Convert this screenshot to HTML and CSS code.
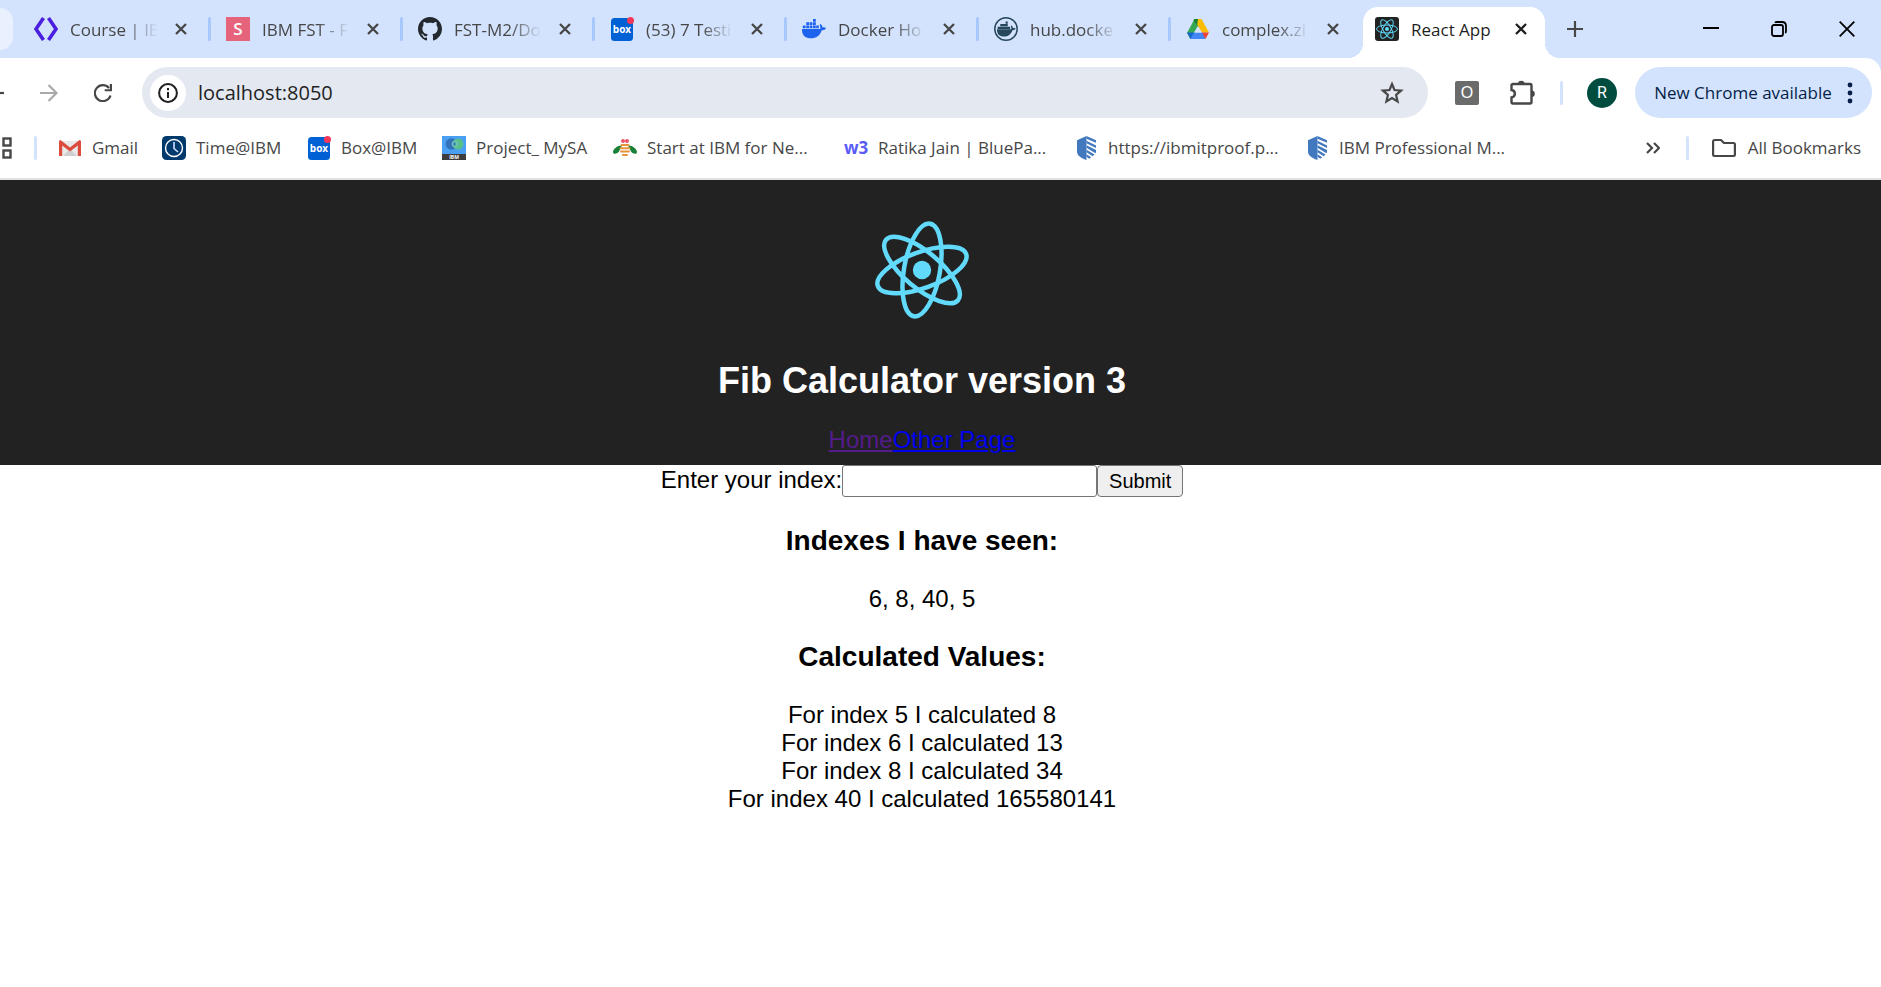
FILE: index.html
```html
<!DOCTYPE html>
<html lang="en">
<head>
<meta charset="utf-8">
<title>React App</title>
<link rel="stylesheet" href="styles.css">
</head>
<body>
<svg class="defs" aria-hidden="true">
  <symbol id="close" viewBox="0 0 12 12"><path d="M1 1l10 10M11 1L1 11" fill="none" stroke="currentColor" stroke-width="2.3"/></symbol>
  <symbol id="box" viewBox="0 0 24 24">
    <rect x="1" y="1" width="22" height="23" rx="3.5" fill="#0061d5"/>
    <text x="12" y="16" text-anchor="middle" class="box-text">box</text>
    <circle cx="20.500" cy="3.500" r="3.500" fill="#f5385a"/>
  </symbol>
  <symbol id="whale" viewBox="0 0 24 24">
    <path d="M0 12h18.200c.4-1 .2-2.800-.6-3.900l.9-1.100c1.300.9 2 2.200 2 3.400 1.200-.3 2.600-.1 3.500.6-.6 1.500-2.200 2.300-4.200 2.200C18 18.500 14.200 21.300 9 21.300 3 21.300-.3 18 0 12z"/>
    <path d="M.8 8.500h2.800v2.800H.8zM4.200 8.500H7v2.800H4.200zM7.600 8.500h2.800v2.800H7.600zM11 8.500h2.800v2.800H11zM14.200 8.500h2.600v2.800h-2.600zM4.200 5.200H7V8H4.200zM7.600 5.200h2.800V8H7.600zM11 5.200h2.800V8H11zM11 1.900h2.800v2.800H11z"/>
  </symbol>
  <symbol id="shield" viewBox="0 0 24 24">
    <g fill="#4178be"><path d="M12.500 0v24C6 22 3 19 3 15.500V4.200z"/>
    <path d="M12.500 0L22 4.200v2.600L12.500 2.800zM12.500 4.800L22 9.600v2.500l-9.500-4.800zM12.500 9.300L22 14v2.200l-.6 1-8.900-5.400zM12.500 13.800l8 4.700-1.800 1.700-6.200-3.900zM12.500 18.300l4.700 3-2 1.400-2.700-1.900z"/></g>
  </symbol>
  <symbol id="react" viewBox="-60 -60 120 120">
    <circle r="9.200" fill="currentColor"/>
    <g fill="none" stroke="currentColor" stroke-width="4.500">
      <ellipse rx="47" ry="18" transform="rotate(-20)"/><ellipse rx="47" ry="18" transform="rotate(-80)"/><ellipse rx="47" ry="18" transform="rotate(40)"/>
    </g>
  </symbol>
  <symbol id="react-small" viewBox="-12 -12 24 24">
    <circle r="2" fill="currentColor"/>
    <g fill="none" stroke="currentColor" stroke-width="1">
      <ellipse rx="10.500" ry="4"/><ellipse rx="10.500" ry="4" transform="rotate(60)"/><ellipse rx="10.500" ry="4" transform="rotate(120)"/>
    </g>
  </symbol>
</svg>

<div class="browser">
  <div class="tabs">
    <span class="tab-stub"></span>
    <div class="tab first"><span class="sep"></span>
      <svg class="icon" viewBox="0 0 24 24"><path d="M9.500 1L2 12l7.500 11M14.500 1L22 12l-7.500 11" fill="none" stroke="#4b1fe0" stroke-width="3.600"/></svg>
      <span class="tab-title">Course | IB</span><button class="tab-close" aria-label="Close tab"><svg><use href="#close"/></svg></button></div>
    <div class="tab"><span class="sep"></span>
      <span class="icon letter-s">S</span>
      <span class="tab-title">IBM FST - F</span><button class="tab-close" aria-label="Close tab"><svg><use href="#close"/></svg></button></div>
    <div class="tab"><span class="sep"></span>
      <svg class="icon" viewBox="0 0 16 16"><path fill="#24292f" d="M8 0C3.580 0 0 3.580 0 8c0 3.540 2.290 6.530 5.470 7.590.4.070.55-.17.55-.38 0-.19-.01-.82-.01-1.490-2.010.37-2.530-.49-2.690-.94-.09-.23-.48-.94-.82-1.130-.28-.15-.68-.52-.01-.53.63-.01 1.080.58 1.230.82.72 1.210 1.870.87 2.330.66.07-.52.28-.87.51-1.070-1.780-.2-3.640-.89-3.640-3.950 0-.87.31-1.590.82-2.150-.08-.2-.36-1.020.08-2.120 0 0 .67-.21 2.200.82.64-.18 1.320-.27 2-.27s1.360.09 2 .27c1.530-1.040 2.200-.82 2.200-.82.44 1.100.16 1.920.08 2.120.51.56.82 1.270.82 2.150 0 3.070-1.870 3.750-3.650 3.950.29.25.54.73.54 1.480 0 1.070-.01 1.930-.01 2.200 0 .21.15.46.55.38A8.010 8.010 0 0 0 16 8c0-4.420-3.580-8-8-8z"/></svg>
      <span class="tab-title">FST-M2/Do</span><button class="tab-close" aria-label="Close tab"><svg><use href="#close"/></svg></button></div>
    <div class="tab"><span class="sep"></span>
      <svg class="icon"><use href="#box"/></svg>
      <span class="tab-title">(53) 7 Testi</span><button class="tab-close" aria-label="Close tab"><svg><use href="#close"/></svg></button></div>
    <div class="tab"><span class="sep"></span>
      <svg class="icon whale"><use href="#whale"/></svg>
      <span class="tab-title">Docker Ho</span><button class="tab-close" aria-label="Close tab"><svg><use href="#close"/></svg></button></div>
    <div class="tab"><span class="sep"></span>
      <svg class="icon" viewBox="0 0 24 24"><circle cx="12" cy="12" r="11.200" fill="none" stroke="#27475d" stroke-width="1.500"/><g fill="#27475d" transform="translate(3 3) scale(.78)"><path d="M0 12h18.200c.4-1 .2-2.800-.6-3.900l.9-1.100c1.300.9 2 2.200 2 3.400 1.200-.3 2.600-.1 3.500.6-.6 1.500-2.200 2.300-4.200 2.200C18 18.500 14.200 21.300 9 21.300 3 21.300-.3 18 0 12zM.8 8.500h16v3H.8zM4.200 5.200h9.600V8H4.200zM11 1.900h2.800v2.800H11z"/></g></svg>
      <span class="tab-title">hub.docke</span><button class="tab-close" aria-label="Close tab"><svg><use href="#close"/></svg></button></div>
    <div class="tab"><span class="sep"></span>
      <svg class="icon" viewBox="0 0 24 24"><path fill="#34a853" d="M8.500 2H12l2.500 4.600L5.200 22H4.400L1 16z"/><path fill="#188038" d="M8.500 2H12l1.500 4.500L11.500 9 7.500 3.600z"/><path fill="#fbbc04" d="M12 2h3.500L23 15.500h-7L11.200 7.500z"/><path fill="#4285f4" d="M7.500 15.500H17l2.500 6.500H4.500z"/><path fill="#1967d2" d="M1 15.500h7L4.500 22z"/><path fill="#ea4335" d="M16 15.500h7L19.500 22z"/><path fill="#d3e3fd" d="M11.800 9l4 6.500H8z"/></svg>
      <span class="tab-title">complex.zi</span><button class="tab-close" aria-label="Close tab"><svg><use href="#close"/></svg></button></div>
    <div class="tab active">
      <svg class="icon react-icon"><use href="#react-small"/></svg>
      <span class="tab-title">React App</span><button class="tab-close" aria-label="Close tab"><svg><use href="#close"/></svg></button></div>
    <button class="new-tab" aria-label="New tab"><svg viewBox="0 0 16 16"><path d="M8 0v16M0 8h16" stroke="#474747" stroke-width="2.200"/></svg></button>
    <div class="window-buttons">
      <button aria-label="Minimize"><svg viewBox="0 0 16 16"><path d="M0 7h16" stroke="#000" stroke-width="2"/></svg></button>
      <button aria-label="Restore"><svg viewBox="0 0 16 16"><g fill="none" stroke="#000" stroke-width="1.800"><rect x="1" y="4" width="11" height="11" rx="2"/><path d="M4 1.800Q4.500 1 6 1h5q4 0 4 4v5q0 1.500-.8 2"/></g></svg></button>
      <button aria-label="Close"><svg viewBox="0 0 16 16"><path d="M.7.7l14.600 14.600M15.300.7L.7 15.300" stroke="#000" stroke-width="1.800"/></svg></button>
    </div>
  </div>

  <div class="toolbar">
    <button class="nav back" aria-label="Back"><svg viewBox="0 0 4 18"><path d="M0 9h4" stroke="#474747" stroke-width="2.200"/></svg></button>
    <button class="nav" aria-label="Forward"><svg viewBox="0 0 18 18"><path d="M0 9h16.500M8.500 1l8 8-8 8" fill="none" stroke="#a9a9a9" stroke-width="2.200"/></svg></button>
    <button class="nav" aria-label="Reload"><svg viewBox="0 0 18 18"><path d="M16.500 11.500A8 8 0 1 1 15 4" fill="none" stroke="#474747" stroke-width="2.200"/><path d="M18 0v7.300h-7.300V5.200h5.100V0z" fill="#474747"/></svg></button>
    <div class="omnibox">
      <button class="site-info" aria-label="Site information"><svg viewBox="0 0 20 20"><circle cx="10" cy="10" r="8.900" fill="none" stroke="#1f1f1f" stroke-width="2"/><path d="M9 9h2v6H9zM9 5h2v2.200H9z" fill="#1f1f1f"/></svg></button>
      <input class="url" aria-label="Address" value="localhost:8050">
      <button class="star" aria-label="Bookmark this tab"><svg viewBox="0 0 24 24"><path d="M12 3l2.500 6 6.600.6-5 4.300 1.500 6.500-5.600-3.400-5.600 3.400 1.500-6.500-5-4.300 6.600-.6z" fill="none" stroke="#474747" stroke-width="2.200"/></svg></button>
    </div>
    <button class="ext" aria-label="Extension O">O</button>
    <button class="puzzle" aria-label="Extensions"><svg viewBox="0 0 25 25"><path d="M3 4h17a1.500 1.500 0 0 1 1.500 1.500V22A1.500 1.500 0 0 1 20 23.500H3A1.500 1.500 0 0 1 1.500 22v-4.500c4.500-.8 4.500-6.700 0-7.500V5.500A1.500 1.500 0 0 1 3 4z" fill="none" stroke="#474747" stroke-width="2.400"/><path d="M8 4a3.300 3.300 0 0 1 6.600 0zM21.500 10.500a3.300 3.300 0 0 1 0 6.600z" fill="#474747"/></svg></button>
    <span class="sep light"></span>
    <button class="avatar" aria-label="Profile">R</button>
    <button class="update">New Chrome available<svg viewBox="0 0 6 22"><circle cx="3" cy="3" r="2.400"/><circle cx="3" cy="11" r="2.400"/><circle cx="3" cy="19" r="2.400"/></svg></button>
  </div>

  <nav class="bookmarks" aria-label="Bookmarks">
    <button class="apps" aria-label="Apps"><svg viewBox="0 0 12 22"><g fill="none" stroke="#474747" stroke-width="2.400"><rect x="3.500" y="1.500" width="7" height="7"/><rect x="3.500" y="13.500" width="7" height="7"/></g></svg></button>
    <span class="sep light"></span>
    <div class="bookmark-list">
      <a href="#"><svg class="icon" viewBox="0 0 24 24"><path fill="#e9e9e9" d="M2 5h20v15H2z"/><path fill="#d0d0d0" d="M5 20l7-7 7 7z"/><path fill="#dd4b3e" d="M1 5.500Q1 4 2.500 4L12 11.500 21.500 4Q23 4 23 5.500V20h-3.200V9.500L12 15.500 4.200 9.500V20H1z"/></svg>Gmail</a>
      <a href="#"><svg class="icon" viewBox="0 0 24 24"><rect width="24" height="24" rx="4.500" fill="#003a6d"/><circle cx="12" cy="12" r="8.500" fill="none" stroke="#fff" stroke-width="1.400"/><path d="M12 6v6.500l4 3.500" fill="none" stroke="#d0e2ff" stroke-width="1.600"/></svg>Time@IBM</a>
      <a href="#"><svg class="icon"><use href="#box"/></svg>Box@IBM</a>
      <a href="#"><svg class="icon" viewBox="0 0 24 24"><path fill="#4b9ff2" d="M0 0h24v18H0z"/><path fill="#3d3d3d" d="M0 18h24v6H0z"/><circle cx="9.500" cy="8" r="5.800" fill="#3271b8"/><circle cx="16" cy="8" r="5.500" fill="#58c08c"/><circle cx="12.500" cy="8" r="2.500" fill="#3d94a6" stroke="#8fd1c9"/><text x="12" y="23" text-anchor="middle" class="ibm-text">IBM</text></svg>Project_ MySA</a>
      <a href="#"><svg class="icon" viewBox="0 0 24 24"><circle cx="10" cy="5" r="2" fill="#ee5366"/><circle cx="14" cy="5" r="2" fill="#ee5366"/><path fill="#198038" d="M9 9.500C5 9 0 13 0 16c0 3 5 2 6.500-1.500zM15 9.500c4-.5 9 3.500 9 6.500 0 3-5 2-6.500-1.500z"/><path d="M8.500 9h7M7.500 12.300h9M8 15.600h8M10 18.900h4" stroke="#e8933b" stroke-width="2" stroke-linecap="round"/></svg>Start at IBM for Ne...</a>
      <a href="#"><span class="icon w3">w3</span>Ratika Jain | BluePa...</a>
      <a href="#"><svg class="icon"><use href="#shield"/></svg>https://ibmitproof.p...</a>
      <a href="#"><svg class="icon"><use href="#shield"/></svg>IBM Professional M...</a>
    </div>
    <button class="more" aria-label="More bookmarks"><svg viewBox="0 0 14 12"><path d="M1 1l5 5-5 5M8 1l5 5-5 5" fill="none" stroke="#474747" stroke-width="2.200"/></svg></button>
    <span class="sep light"></span>
    <button class="all"><svg class="icon" viewBox="0 0 24 24"><path d="M2.500 4h6.500l3 3h9.500a1.400 1.400 0 0 1 1.400 1.400v10.200a1.400 1.400 0 0 1-1.400 1.400h-19a1.400 1.400 0 0 1-1.400-1.400V5.400A1.400 1.400 0 0 1 2.500 4z" fill="none" stroke="#474747" stroke-width="2.200"/></svg>All Bookmarks</button>
  </nav>
</div>

<div class="app">
  <header class="app-header">
    <svg class="app-logo" role="img" aria-label="logo"><use href="#react"/></svg>
    <h1>Fib Calculator version 3</h1>
    <a class="visited" href="#">Home</a><a href="#other">Other Page</a>
  </header>
  <main>
    <form><label for="index">Enter your index:</label><input id="index" type="text"><button type="button">Submit</button></form>
    <h3>Indexes I have seen:</h3>
    <div>6, 8, 40, 5</div>
    <h3>Calculated Values:</h3>
    <div>For index 5 I calculated 8</div>
    <div>For index 6 I calculated 13</div>
    <div>For index 8 I calculated 34</div>
    <div>For index 40 I calculated 165580141</div>
  </main>
</div>
</body>
</html>
```

FILE: styles.css
```css
* { box-sizing: border-box; }
body {
  margin: 0;
  background: #fff;
  color: #000;
  overflow-x: hidden;
}
.defs { position: absolute; width: 0; height: 0; }

/* Browser chrome */
.browser {
  font: 17px/24px "Open Sans", "Noto Sans", sans-serif;
  color: #474747;
  background: #d3e3fd;
  border-bottom: 2px solid #e2e2e2;
}
.browser button {
  display: flex;
  align-items: center;
  justify-content: center;
  flex: none;
  padding: 0;
  border: 0;
  background: none;
  color: inherit;
  font: inherit;
}
.browser svg { display: block; flex: none; }
.browser .icon { width: 24px; height: 24px; flex: none; }
.sep { flex: none; width: 3px; height: 24px; border-radius: 2px; background: #a8c7fa; }
.sep.light { background: #d3e3fd; }

.tabs {
  display: flex;
  align-items: center;
  height: 58px;
}
.tab-stub {
  flex: none;
  width: 13px;
  height: 42px;
  margin-right: 3px;
  border-radius: 0 15px 15px 0;
  background: #e9f1fe;
}
.tab {
  display: flex;
  align-items: center;
  flex: 0 1 192px;
  min-width: 0;
  padding-right: 21px;
}
.tab .icon { margin: 0 12px 0 15px; }
.tab.first .sep { background: none; }
.tab-title {
  flex: 1;
  min-width: 0;
  margin-right: 13px;
  padding-top: 1px;
  overflow: hidden;
  white-space: nowrap;
  -webkit-mask-image: linear-gradient(to right, #000 60%, transparent 95%);
  mask-image: linear-gradient(to right, #000 60%, transparent 95%);
}
.tab-close svg { width: 12px; height: 12px; }
.letter-s {
  background: #e6637c;
  color: #fff;
  font-weight: 600;
  text-align: center;
}
.whale { fill: #1d63ed; }
.box-text { font: 700 10px "Open Sans", sans-serif; fill: #fff; }
.ibm-text { font: 700 5px "Open Sans", sans-serif; fill: #fff; }
.tab.active {
  position: relative;
  align-self: flex-end;
  flex-basis: 182px;
  height: 51px;
  margin-left: 3px;
  padding: 0 18px 7px 12px;
  border-radius: 15px 15px 0 0;
  background: #fff;
  color: #1f1f1f;
}
.tab.active::before, .tab.active::after {
  content: "";
  position: absolute;
  bottom: 0;
  width: 15px;
  height: 15px;
}
.tab.active::before { right: 100%; background: radial-gradient(circle at 0 0, transparent 15px, #fff 15px); }
.tab.active::after { left: 100%; background: radial-gradient(circle at 100% 0, transparent 15px, #fff 15px); }
.tab.active .icon { margin-left: 0; }
.tab.active .tab-title { mask-image: none; -webkit-mask-image: none; }
.react-icon { border-radius: 3px; background: #222; color: #61dafb; }
.new-tab { margin-left: 22px; }
.new-tab svg, .window-buttons svg { width: 16px; height: 16px; }
.window-buttons {
  display: flex;
  margin-left: auto;
}
.window-buttons button { width: 68px; height: 40px; }

.toolbar {
  display: flex;
  align-items: center;
  padding: 9px 9px 0 0;
  border-top-right-radius: 15px;
  background: #fff;
}
.nav svg { width: 18px; height: 18px; }
.nav { margin-right: 36px; }
.nav.back svg { width: 4px; }
.nav + .nav + .nav { margin-right: 30px; }
.omnibox {
  display: flex;
  align-items: center;
  flex: 1;
  min-width: 0;
  height: 51px;
  padding: 0 24px 0 8px;
  border-radius: 26px;
  background: #e4e8f1;
}
.browser .site-info { width: 36px; height: 36px; border-radius: 50%; background: #fff; }
.site-info svg { width: 20px; height: 20px; }
.url {
  flex: 1;
  min-width: 0;
  margin-left: 12px;
  padding: 0;
  border: 0;
  background: none;
  color: #1f1f1f;
  font: 20px/28px "Open Sans", "Noto Sans", sans-serif;
}
.star svg { width: 24px; height: 24px; }
.browser .ext {
  width: 24px;
  height: 24px;
  margin: 0 31px 0 27px;
  border-radius: 2px;
  background: #6b6b6b;
  color: #fff;
  font: 16px/24px "Liberation Sans", sans-serif;
}
.puzzle { margin-right: 25px; }
.puzzle svg { width: 25px; height: 25px; }
.browser .avatar {
  width: 30px;
  height: 30px;
  margin: 0 18px 0 24px;
  border-radius: 50%;
  background: #004d40;
  color: #fff;
  font: 16px/30px Roboto, sans-serif;
}
.browser .update {
  gap: 15px;
  width: 237px;
  height: 51px;
  border-radius: 26px;
  background: #d3e3fd;
  color: #041e49;
}
.update svg { width: 6px; height: 22px; fill: #041e49; }

.bookmarks {
  display: flex;
  align-items: center;
  height: 60px;
  padding-right: 20px;
  background: #fff;
}
.apps svg { width: 12px; height: 22px; }
.apps { margin-right: 22px; }
.bookmark-list {
  display: grid;
  grid-template-columns: 104px 145px 135px 171px 231px 230px 231px 1fr;
  flex: 1;
  min-width: 0;
  margin-left: 21px;
}
.bookmark-list a, .browser .all {
  display: flex;
  align-items: center;
  gap: 10px;
  color: #474747;
  text-decoration: none;
  white-space: nowrap;
}
.w3 { color: #5a5cf5; font-weight: 700; }
.more svg { width: 14px; height: 12px; }
.more { margin-right: 26px; }
.browser .all { gap: 12px; margin-left: 23px; }

/* Page: its centre line sits left of the window's centre */
.app {
  font: 24px/28px "Liberation Sans", Arial, sans-serif;
  text-align: center;
}
.app-header, main { padding-right: 37px; }
.app-header {
  padding-top: 30px;
  padding-bottom: 11px;
  background: #222;
  color: #fff;
}
.app-logo { display: block; width: 120px; height: 120px; margin: 0 auto; color: #61dafb; }
h1 { margin: 30px 0 25px; font-size: 36px; line-height: 41px; }
.app-header a { color: #0000ee; }
.app-header .visited { color: #551a8b; }
form { display: flex; justify-content: center; }
form label { line-height: 30px; }
form input {
  width: 255px;
  height: 32px;
  padding: 1px 3px;
  border: 1px solid #767676;
  border-radius: 3px;
  font: 20px "Liberation Sans", Arial, sans-serif;
}
form button {
  width: 86px;
  height: 32px;
  padding: 0;
  border: 1px solid #767676;
  border-radius: 4px;
  background: #efefef;
  color: #000;
  font: 20px "Liberation Sans", Arial, sans-serif;
}
h3 { margin: 28px 0; font-size: 28px; line-height: 32px; }
```
